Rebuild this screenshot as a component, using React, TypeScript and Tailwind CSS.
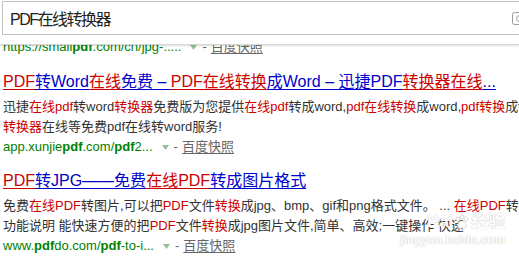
import React from 'react';

type Seg = { t: string; c?: 'r' | 'b' | 'd'; bold?: boolean };

const font = { fontFamily: '"Liberation Sans", "Noto Sans CJK SC", sans-serif' };

function Title({ segs }: { segs: Seg[] }) {
    return (
        <div className="whitespace-nowrap text-[16px] leading-[22px]">
            {segs.map((s, i) => (
                <span
                    key={i}
                    className={`underline underline-offset-[2px] ${s.c === 'r' ? 'text-[#cc0000]' : 'text-[#0000cc]'}`}
                >
                    {s.t}
                </span>
            ))}
        </div>
    );
}

function Desc({ segs }: { segs: Seg[] }) {
    return (
        <div className="whitespace-nowrap text-[13px] leading-[20px] text-[#333]">
            {segs.map((s, i) => (
                <span key={i} className={s.c === 'r' ? 'text-[#cc0000]' : ''}>
                    {s.t}
                </span>
            ))}
        </div>
    );
}

function Url({ segs }: { segs: Seg[] }) {
    return (
        <div className="flex items-center whitespace-nowrap text-[13px] leading-[20px]">
            <span className="text-[#008000]">
                {segs.map((s, i) => (
                    <span key={i} className={s.bold ? 'font-bold' : ''}>
                        {s.t}
                    </span>
                ))}
            </span>
            {/* dropdown arrow */}
            <svg className="ml-[9px] mt-[1px]" width="7" height="5" viewBox="0 0 7 5">
                <path d="M0 0h7L3.5 5z" fill="#8fc497" />
            </svg>
            <span className="ml-[5px] text-[#666]">-</span>
            <span className="ml-[4px] text-[#666] underline underline-offset-[2px]">百度快照</span>
        </div>
    );
}

export default function App() {
    return (
        <div className="relative w-[519px] h-[258px] overflow-hidden bg-white" style={font}>
            {/* Search header */}
            <div className="relative z-10 h-[44px] bg-white border-b border-[#d6d6d6] shadow-[0_1px_2px_rgba(0,0,0,0.14)]">
                <div className="ml-[2px] mt-[1px] flex h-[34px] w-[530px] items-center border border-[#c2c2c2] pl-[7px]">
                    <span className="flex-1 pt-[3px] text-[16px] tracking-[-1.5px] text-[#222]">PDF在线转换器</span>
                    <svg className="mr-[4px]" width="15" height="13" viewBox="0 0 15 13">
                        <rect x="0.5" y="0.5" width="14" height="12" rx="2" fill="none" stroke="#9a9a9a" />
                        <circle cx="7.5" cy="6.5" r="3" fill="none" stroke="#9a9a9a" />
                    </svg>
                </div>
            </div>

            {/* Results */}
            <div className="flex flex-col pl-[3px]">
                <div className="-mt-[8px]">
                    <Url segs={[{ t: 'https://small' }, { t: 'pdf', bold: true }, { t: '.com/cn/jpg-.....' }]} />
                </div>

                <div className="mt-[14px]">
                    <Title
                        segs={[
                            { t: 'PDF', c: 'r' },
                            { t: '转Word' },
                            { t: '在线', c: 'r' },
                            { t: '免费 – ' },
                            { t: 'PDF在线转换', c: 'r' },
                            { t: '成Word – 迅捷PDF' },
                            { t: '转换器在线', c: 'r' },
                            { t: '...' },
                        ]}
                    />
                </div>
                <div className="mt-[4px]">
                    <Desc
                        segs={[
                            { t: '迅捷' },
                            { t: '在线pdf', c: 'r' },
                            { t: '转word' },
                            { t: '转换器', c: 'r' },
                            { t: '免费版为您提供' },
                            { t: '在线pdf', c: 'r' },
                            { t: '转成word,' },
                            { t: 'pdf在线转换', c: 'r' },
                            { t: '成word,' },
                            { t: 'pdf转换', c: 'r' },
                            { t: '成word,' },
                        ]}
                    />
                    <Desc segs={[{ t: '转换器', c: 'r' }, { t: '在线等免费pdf在线转word服务!' }]} />
                    <Url
                        segs={[
                            { t: 'app.xunjie' },
                            { t: 'pdf', bold: true },
                            { t: '.com/' },
                            { t: 'pdf', bold: true },
                            { t: '2...' },
                        ]}
                    />
                </div>

                <div className="mt-[13px]">
                    <Title
                        segs={[
                            { t: 'PDF', c: 'r' },
                            { t: '转JPG——免费' },
                            { t: '在线PDF', c: 'r' },
                            { t: '转成图片格式' },
                        ]}
                    />
                </div>
                <div className="mt-[4px]">
                    <Desc
                        segs={[
                            { t: '免费' },
                            { t: '在线PDF', c: 'r' },
                            { t: '转图片,可以把' },
                            { t: 'PDF', c: 'r' },
                            { t: '文件' },
                            { t: '转换', c: 'r' },
                            { t: '成jpg、bmp、gif和png格式文件。 ... ' },
                            { t: '在线PDF', c: 'r' },
                            { t: '转JPG' },
                        ]}
                    />
                    <Desc
                        segs={[
                            { t: '功能说明 能快速方便的把' },
                            { t: 'PDF', c: 'r' },
                            { t: '文件' },
                            { t: '转换', c: 'r' },
                            { t: '成jpg图片文件,简单、高效;一键操作 快速' },
                        ]}
                    />
                    <Url
                        segs={[
                            { t: 'www.' },
                            { t: 'pdf', bold: true },
                            { t: 'do.com/' },
                            { t: 'pdf', bold: true },
                            { t: '-to-i...' },
                        ]}
                    />
                </div>
            </div>

            {/* Baidu jingyan watermark */}
            <div className="pointer-events-none absolute left-[400px] top-[211px] flex flex-col items-end text-white [text-shadow:0_0_1px_rgba(0,0,0,0.35)]">
                <div className="flex items-center text-[17px] font-bold leading-[22px]">
                    <span>Bai</span>
                    <svg width="16" height="16" viewBox="0 0 16 16" className="mx-[1px]">
                        <g fill="#fff" stroke="#cfcfcf" strokeWidth="0.8">
                            <ellipse cx="4" cy="5" rx="1.8" ry="2.3" />
                            <ellipse cx="8" cy="3" rx="1.8" ry="2.3" />
                            <ellipse cx="12" cy="5" rx="1.8" ry="2.3" />
                            <path d="M8 7c3 0 5 4 4 6s-2 1-4 1-3 1-4-1 1-6 4-6z" />
                        </g>
                    </svg>
                    <span>经验</span>
                </div>
                <div className="text-[12px] font-bold leading-[14px]">jingyan.baidu.com</div>
            </div>
        </div>
    );
}
